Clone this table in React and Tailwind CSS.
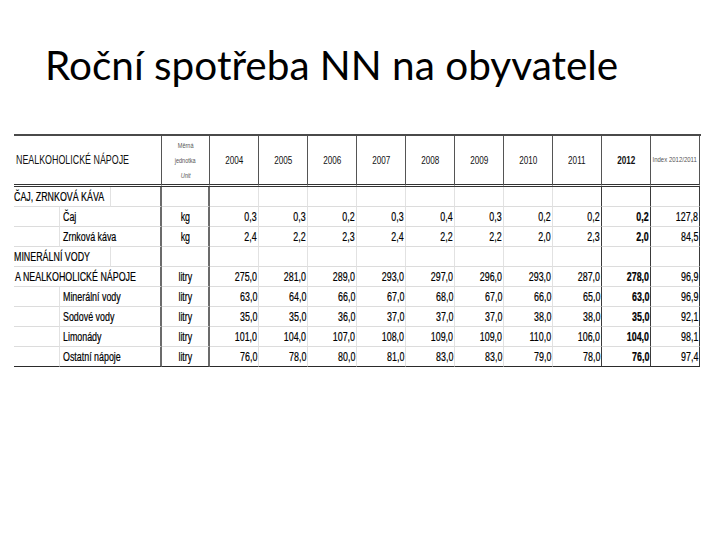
const years = ["2004", "2005", "2006", "2007", "2008", "2009", "2010", "2011", "2012"]

const rows = [
  { label: "ČAJ, ZRNKOVÁ KÁVA", kind: "group" },
  { label: "Čaj", kind: "item", unit: "kg", vals: ["0,3", "0,3", "0,2", "0,3", "0,4", "0,3", "0,2", "0,2", "0,2", "127,8"] },
  { label: "Zrnková káva", kind: "item", unit: "kg", vals: ["2,4", "2,2", "2,3", "2,4", "2,2", "2,2", "2,0", "2,3", "2,0", "84,5"] },
  { label: "MINERÁLNÍ VODY", kind: "group" },
  { label: "A NEALKOHOLICKÉ NÁPOJE", kind: "full", unit: "litry", vals: ["275,0", "281,0", "289,0", "293,0", "297,0", "296,0", "293,0", "287,0", "278,0", "96,9"] },
  { label: "Minerální vody", kind: "item", unit: "litry", vals: ["63,0", "64,0", "66,0", "67,0", "68,0", "67,0", "66,0", "65,0", "63,0", "96,9"] },
  { label: "Sodové vody", kind: "item", unit: "litry", vals: ["35,0", "35,0", "36,0", "37,0", "37,0", "37,0", "38,0", "38,0", "35,0", "92,1"] },
  { label: "Limonády", kind: "item", unit: "litry", vals: ["101,0", "104,0", "107,0", "108,0", "109,0", "109,0", "110,0", "106,0", "104,0", "98,1"] },
  { label: "Ostatní nápoje", kind: "item", unit: "litry", vals: ["76,0", "78,0", "80,0", "81,0", "83,0", "83,0", "79,0", "78,0", "76,0", "97,4"] },
]

// the sheet was pasted as a squeezed picture, so the text runs narrow
const Sq = ({ children, origin = "origin-left", className = "" }) => (
  <span className={`inline-block whitespace-nowrap scale-x-[0.74] ${origin} ${className}`}>{children}</span>
)

const valBorder = (i) => {
  if (i === 7 || i === 8 || i === 9) return "border-r border-r-[#3a3a3a]"
  return "border-r border-r-[#e2e2e2]"
}

const bodyText = "text-[12px] text-black [-webkit-text-stroke:0.2px_#000]"

function NameCells({ row, last }) {
  const bottom = last ? "border-b border-b-[#2a2a2a]" : "border-b border-b-[#dcdcdc]"
  const text = `flex items-center overflow-visible ${bodyText}`
  if (row.kind === "group") {
    return (
      <>
        <div className={`col-span-2 border-r border-r-[#e2e2e2] ${bottom} ${text}`}>
          <Sq>{row.label}</Sq>
        </div>
        <div className={`border-r-2 border-r-[#6b6b6b] ${bottom}`} />
      </>
    )
  }
  if (row.kind === "full") {
    return (
      <div className={`col-span-3 border-r-2 border-r-[#6b6b6b] pl-[1px] ${bottom} ${text}`}>
        <Sq>{row.label}</Sq>
      </div>
    )
  }
  return (
    <>
      <div className={`border-r border-r-[#e2e2e2] ${bottom}`} />
      <div className={`col-span-2 border-r-2 border-r-[#6b6b6b] pl-[3px] ${bottom} ${text}`}>
        <Sq>{row.label}</Sq>
      </div>
    </>
  )
}

export default function App() {
  return (
    <div className="w-[720px] h-[540px] bg-white overflow-hidden">
      <h1 className="pl-[45px] pt-[39px] font-['Lato','Open_Sans',sans-serif] text-[40.5px] leading-[52px] text-black">
        Roční spotřeba NN na obyvatele
      </h1>

      <div className="ml-[14px] mt-[43px] grid grid-cols-[46px_51px_51px_48px_repeat(10,49px)] grid-rows-[51px_repeat(9,20px)] w-[687px] border-t-2 border-t-[#4a4a4a] font-['Liberation_Sans',Arial,sans-serif]">
        {/* header */}
        <div className="col-span-3 flex items-center pl-[2px] border-r border-r-[#555] border-b-[3px] border-double border-b-[#333] text-[12px] text-[#111]">
          <Sq>NEALKOHOLICKÉ NÁPOJE</Sq>
        </div>
        <div className="flex flex-col items-center justify-center gap-[4px] border-r border-r-[#555] border-b-[3px] border-double border-b-[#333] text-[7.5px] leading-[11px] text-[#555]">
          <Sq origin="origin-center">Měrná</Sq>
          <Sq origin="origin-center">jednotka</Sq>
          <Sq origin="origin-center" className="italic">Unit</Sq>
        </div>
        {years.map((y) => (
          <div
            key={y}
            className={`flex items-center justify-center border-r border-r-[#555] border-b-[3px] border-double border-b-[#333] text-[11px] text-[#111] ${y === "2012" ? "font-bold" : ""}`}
          >
            <Sq origin="origin-center">{y}</Sq>
          </div>
        ))}
        <div className="flex items-center justify-center overflow-visible border-r border-r-[#555] border-b-[3px] border-double border-b-[#333] text-[7.5px] text-[#555]">
          <span className="inline-block whitespace-nowrap scale-x-[0.8] origin-center">Index 2012/2011</span>
        </div>

        {/* body */}
        {rows.map((row, r) => {
          const last = r === rows.length - 1
          const bottom = last ? "border-b border-b-[#2a2a2a]" : "border-b border-b-[#dcdcdc]"
          return (
            <div key={row.label} className="contents">
              <NameCells row={row} last={last} />
              <div className={`flex items-center justify-center border-r-2 border-r-[#6b6b6b] ${bodyText} ${bottom}`}>
                {row.unit ? <Sq origin="origin-center">{row.unit}</Sq> : null}
              </div>
              {Array.from({ length: 10 }).map((_, i) => (
                <div
                  key={i}
                  className={`flex items-center justify-end pr-[1px] ${bodyText} ${valBorder(i)} ${bottom} ${i === 8 ? "font-bold" : ""}`}
                >
                  {row.vals ? <Sq origin="origin-right">{row.vals[i]}</Sq> : null}
                </div>
              ))}
            </div>
          )
        })}
      </div>
    </div>
  )
}
